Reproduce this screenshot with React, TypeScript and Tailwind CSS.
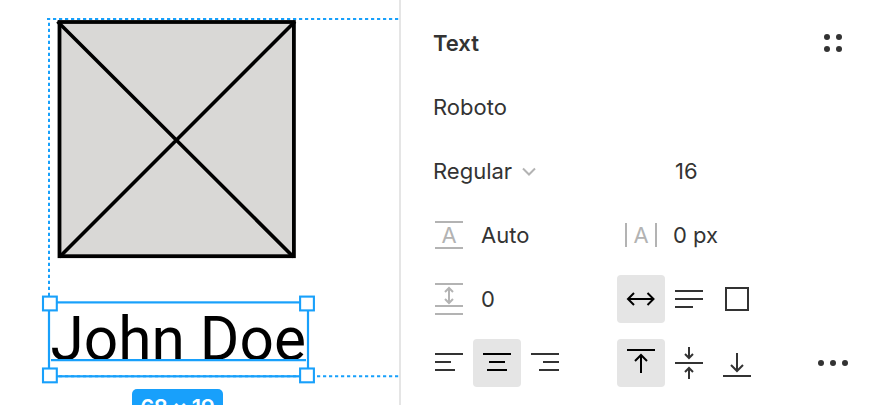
import type { ReactNode } from "react";

function Icon({ children, className = "text-[#333333]" }: { children?: ReactNode; className?: string }) {
  return (
    <svg
      viewBox="0 0 48 48"
      className={`size-12 shrink-0 ${className}`}
      fill="none"
      stroke="currentColor"
      strokeWidth={2}
    >
      {children}
    </svg>
  );
}

function Cell({ active = false, label, children }: { active?: boolean; label: string; children: ReactNode }) {
  return (
    <button
      aria-label={label}
      className={active ? "size-12 rounded-[4px] bg-[#e5e5e5]" : "size-12"}
    >
      <Icon className={active ? "text-black" : "text-[#333333]"}>{children}</Icon>
    </button>
  );
}

function Letter() {
  return (
    <text
      x="24"
      y="32"
      textAnchor="middle"
      fill="currentColor"
      stroke="none"
      className="font-['Inter',sans-serif] text-[22px] font-normal"
    >
      A
    </text>
  );
}

function Canvas() {
  return (
    <section className="relative h-full w-[399px] shrink-0 overflow-hidden">
      <svg className="absolute inset-0" width="399" height="405" viewBox="0 0 399 405" fill="none">
        <rect x="59.5" y="22" width="234.4" height="234.2" fill="#d9d8d6" stroke="#000" strokeWidth="3.8" />
        <path d="M57.5 21.5 293.5 257M295 21.5 59.5 257" stroke="#000" strokeWidth="3.6" />
        <g stroke="#18a0fb" strokeWidth="2" strokeDasharray="3.2 2.8">
          <path d="M47 19H399" />
          <path d="M49 22.7V376" />
          <path d="M47 376.2H399" />
        </g>
      </svg>
      <p className="absolute left-[50.5px] top-[304px] whitespace-nowrap font-['Roboto',sans-serif] text-[60.4px] leading-[72px] text-black">
        John Doe
      </p>
      <svg className="absolute inset-0" width="399" height="405" viewBox="0 0 399 405" fill="none">
        <path d="M51 360.1H306" stroke="#18a0fb" strokeWidth="2.2" />
        <rect x="49" y="302.4" width="259" height="73.9" stroke="#18a0fb" strokeWidth="2.2" />
        <g fill="#fff" stroke="#18a0fb" strokeWidth="2.1">
          <rect x="43" y="296.6" width="13.8" height="13.8" />
          <rect x="300.1" y="296.6" width="13.8" height="13.8" />
          <rect x="43" y="368.5" width="13.8" height="13.8" />
          <rect x="300.1" y="368.5" width="13.8" height="13.8" />
        </g>
      </svg>
      <div className="absolute left-[132px] top-[389px] flex h-9 w-[90.5px] items-center justify-center rounded-[5px] bg-[#18a0fb] font-['Inter',sans-serif] text-[22px] font-semibold leading-9 tracking-[-0.5px] whitespace-nowrap text-white">
        68 × 19
      </div>
    </section>
  );
}

export default function App() {
  return (
    <main className="flex h-[405px] w-[869px] overflow-hidden bg-white">
      <Canvas />
      <aside className="flex flex-1 flex-col border-l-2 border-[#e5e5e5] pl-6 pr-3 pt-[11px] font-['Inter',sans-serif] text-[22px] leading-8 tracking-[0px] text-[#333333]">
        <div className="flex h-16 shrink-0 items-center justify-between pl-2">
          <h2 className="font-semibold">Text</h2>
          <Cell label="Styles">
            <g fill="currentColor" stroke="none">
              <circle cx="18" cy="18" r="3" />
              <circle cx="30" cy="18" r="3" />
              <circle cx="18" cy="30" r="3" />
              <circle cx="30" cy="30" r="3" />
            </g>
          </Cell>
        </div>
        <div className="flex h-16 shrink-0 items-center pl-2">Roboto</div>
        <div className="flex h-16 shrink-0 items-center pl-2">
          <div className="flex w-[242px] items-center">
            Regular
            <svg className="ml-2.5 mt-0.5 text-[#b3b3b3]" width="14" height="10" viewBox="0 0 14 10" fill="none" stroke="currentColor" strokeWidth="2">
              <path d="M1 1.5 7 7.5 13 1.5" />
            </svg>
          </div>
          <span>16</span>
        </div>
        <div className="flex h-16 shrink-0 items-center">
          <div className="flex w-48 items-center gap-2">
            <Icon className="text-[#b3b3b3]">
              <path d="M10 11H38M10 37H38" />
              <Letter />
            </Icon>
            <span>Auto</span>
          </div>
          <div className="flex items-center gap-2">
            <Icon className="text-[#b3b3b3]">
              <path d="M9 12V36M39 12V36" />
              <Letter />
            </Icon>
            <span>0 px</span>
          </div>
        </div>
        <div className="flex h-16 shrink-0 items-center">
          <div className="flex w-48 items-center gap-2">
            <Icon className="text-[#b3b3b3]">
              <path d="M10 9H38M10 31H38M10 39H38M24 13.5V27.5M20 17 24 13 28 17M20 24 24 28 28 24" />
            </Icon>
            <span>0</span>
          </div>
          <div className="flex">
            <Cell label="Auto width" active>
              <path d="M11.5 24H36.5M17 18 11 24 17 30M30.5 18 36.5 24 30.5 30" />
            </Cell>
            <Cell label="Auto height">
              <path d="M10 16H38M10 24H38M10 32H28" />
            </Cell>
            <Cell label="Fixed size">
              <path d="M13 13H35V35H13Z" />
            </Cell>
          </div>
        </div>
        <div className="flex h-16 shrink-0 items-center">
          <div className="flex w-48">
            <Cell label="Align left">
              <path d="M10 15H38M10 23H26M10 31H30" />
            </Cell>
            <Cell label="Align center" active>
              <path d="M10 15H38M16 23H32M14 31H34" />
            </Cell>
            <Cell label="Align right">
              <path d="M10 15H38M22 23H38M18 31H38" />
            </Cell>
          </div>
          <div className="flex w-48">
            <Cell label="Align top" active>
              <path d="M10 11H38M24 16V34M18 22 24 16 30 22" />
            </Cell>
            <Cell label="Align middle">
              <path d="M10 24H38M24 8V19M20 15 24 19 28 15M24 40V29M20 33 24 29 28 33" />
            </Cell>
            <Cell label="Align bottom">
              <path d="M10 37H38M24 14V32M18 26 24 32 30 26" />
            </Cell>
          </div>
          <Cell label="More">
            <g fill="currentColor" stroke="none">
              <circle cx="12" cy="24" r="3" />
              <circle cx="24" cy="24" r="3" />
              <circle cx="36" cy="24" r="3" />
            </g>
          </Cell>
        </div>
      </aside>
    </main>
  );
}
